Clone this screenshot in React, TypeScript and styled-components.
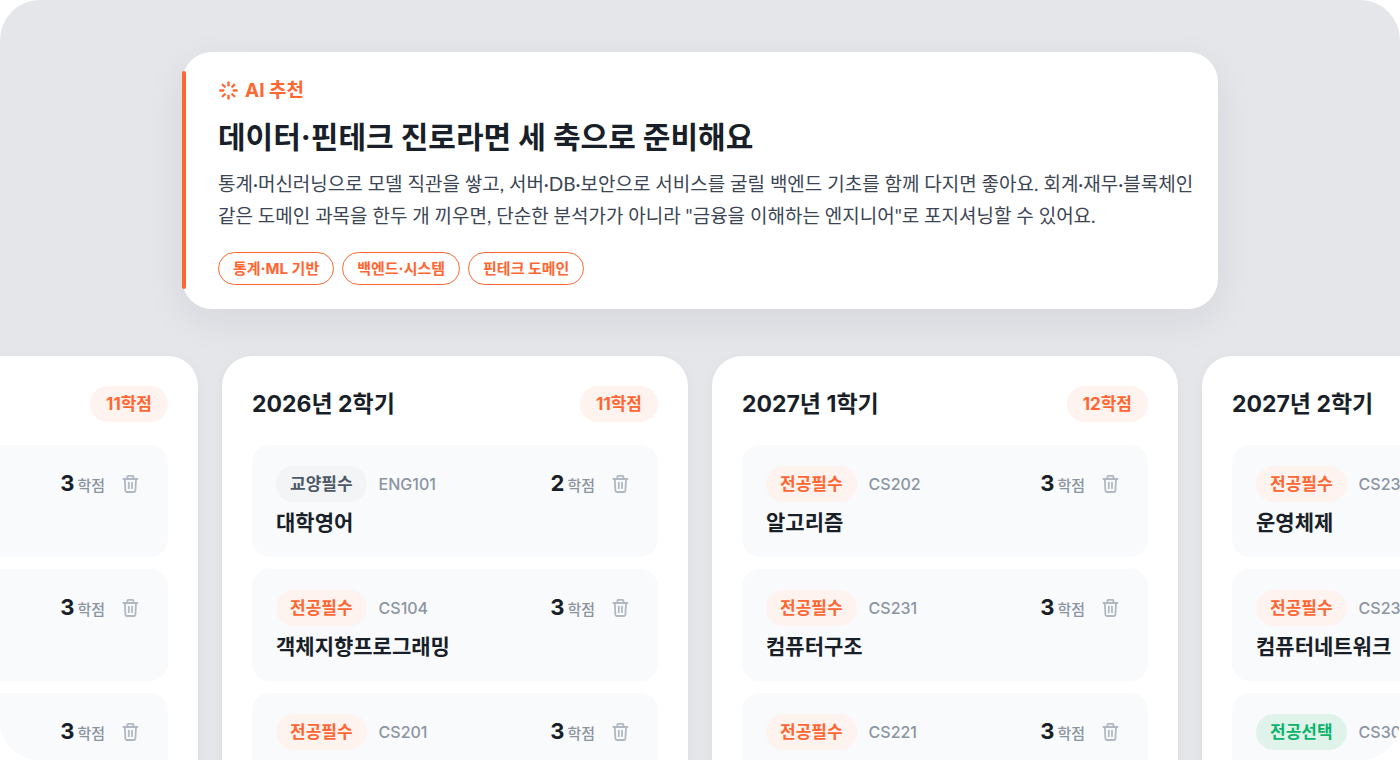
import React from "react";
import styled, { createGlobalStyle, css } from "styled-components";

const color = {
  page: "#ffffff",
  canvas: "#e5e6ea",
  card: "#ffffff",
  item: "#f9fafc",
  accent: "#ff6631",
  accentSoft: "#fff3ef",
  green: "#0ab46c",
  greenSoft: "#e0f3eb",
  gray: "#4e5968",
  graySoft: "#f2f4f6",
  ink: "#191f28",
  text: "#3b4554",
  muted: "#8b95a1",
  icon: "#b0b8c1",
};

const GlobalStyle = createGlobalStyle`
  *, *::before, *::after { box-sizing: border-box; }
  body {
    margin: 0;
    background: ${color.page};
    color: ${color.ink};
    font-family: Inter, "Noto Sans CJK KR", sans-serif;
  }
  h1, h2, h3, p, ul { margin: 0; padding: 0; }
  ul { list-style: none; }
`;

const Canvas = styled.main`
  display: flex;
  flex-direction: column;
  align-items: center;
  gap: 47px;
  height: 100vh;
  padding-top: 52px;
  overflow: hidden;
  border-radius: 40px;
  background: ${color.canvas};
`;

const Advice = styled.section`
  position: relative;
  flex: none;
  width: 74%;
  min-width: 1036px;
  padding: 25px 24px 24px 36px;
  border-radius: 30px;
  background: ${color.card};
  box-shadow: 0 12px 40px rgba(25, 31, 40, 0.07);

  &::before {
    content: "";
    position: absolute;
    top: 19px;
    bottom: 20px;
    left: 0;
    width: 4px;
    border-radius: 2px;
    background: ${color.accent};
  }
`;

const AdviceLabel = styled.p`
  display: flex;
  align-items: center;
  gap: 6px;
  color: ${color.accent};
  font-size: 19px;
  font-weight: 700;
  line-height: 28px;

  svg {
    margin-bottom: 2px;
  }
`;

const AdviceTitle = styled.h1`
  margin-top: 11px;
  font-size: 30px;
  font-weight: 700;
  line-height: 42px;
`;

const AdviceText = styled.p`
  margin-top: 10px;
  color: ${color.text};
  font-family: Lato, "Noto Sans CJK KR", sans-serif;
  font-size: 19px;
  line-height: 32px;
  word-break: keep-all;
`;

const TagList = styled.ul`
  display: flex;
  gap: 8px;
  margin-top: 20px;
`;

const Tag = styled.li`
  padding: 1px 14px 0;
  border: 1px solid ${color.accent};
  border-radius: 17px;
  color: ${color.accent};
  font-size: 15px;
  font-weight: 700;
  line-height: 30px;
`;

const Board = styled.div`
  display: flex;
  flex: none;
  gap: 24px;
`;

const Semester = styled.section`
  width: 466px;
  padding: 30px;
  border-radius: 30px;
  background: ${color.card};
  box-shadow: 0 2px 12px rgba(25, 31, 40, 0.04);
`;

const SemesterHeader = styled.header`
  display: flex;
  align-items: center;
  justify-content: space-between;
  margin-bottom: 23px;
`;

const SemesterTitle = styled.h2`
  font-size: 23px;
  font-weight: 700;
  line-height: 36px;
`;

type Tone = "accent" | "gray" | "green";

const tones = {
  accent: css`color: ${color.accent}; background: ${color.accentSoft};`,
  gray: css`color: ${color.gray}; background: ${color.graySoft};`,
  green: css`color: ${color.green}; background: ${color.greenSoft};`,
};

const Badge = styled.span<{ $tone: Tone; $wide?: boolean }>`
  padding: 0 ${({ $wide }) => ($wide ? 16 : 14)}px;
  border-radius: 18px;
  font-size: 17px;
  font-weight: 700;
  line-height: 36px;
  white-space: nowrap;
  ${({ $tone }) => tones[$tone]}
`;

const CourseList = styled.ul`
  display: grid;
  gap: 12px;
`;

const Course = styled.li`
  height: 112px;
  padding: 21px 24px;
  border-radius: 18px;
  background: ${color.item};
`;

const CourseTop = styled.div`
  display: flex;
  align-items: center;
  height: 36px;
`;

const Code = styled.span`
  margin-left: 12px;
  color: ${color.muted};
  font-size: 16px;
  font-weight: 500;
`;

const Credit = styled.span`
  margin-left: auto;
  color: ${color.muted};
  font-size: 15px;
  font-weight: 500;
  line-height: 36px;
`;

const CreditValue = styled.strong`
  margin-right: 3px;
  color: ${color.ink};
  font-size: 22px;
  font-weight: 700;
`;

const DeleteButton = styled.button`
  display: flex;
  margin: 0 3px 0 14px;
  padding: 0;
  border: 0;
  background: none;
  color: ${color.icon};
  cursor: pointer;
`;

const CourseName = styled.h3`
  margin-top: 5px;
  font-size: 21px;
  font-weight: 700;
  line-height: 32px;
`;

const SparkIcon = () => (
  <svg width="21" height="21" viewBox="0 0 21 21" fill="none" stroke="currentColor" strokeWidth="2.4" strokeLinecap="round" aria-hidden="true">
    {[0, 45, 90, 135, 180, 225, 270, 315].map((angle) => (
      <path key={angle} d="M10.5 2.4V5.2" transform={`rotate(${angle} 10.5 10.5)`} />
    ))}
  </svg>
);

const TrashIcon = () => (
  <svg width="22" height="22" viewBox="0 0 22 22" fill="none" stroke="currentColor" strokeWidth="1.8" strokeLinecap="round" strokeLinejoin="round" aria-hidden="true">
    <path d="M4.4 6H18.4" />
    <path d="M8.4 5.8V3.6Q8.4 2.8 9.2 2.8H13.6Q14.4 2.8 14.4 3.6V5.8" />
    <path d="M5.8 6.2L6.4 17.8Q6.5 19 7.7 19H15.1Q16.3 19 16.4 17.8L17 6.2" />
    <path d="M9.8 9.6V15.2M13 9.6V15.2" />
  </svg>
);

type CourseData = { kind: string; code: string; name: string; credit: number };
type SemesterData = { title: string; courses: CourseData[]; total: number };

const toneOf: Record<string, Tone> = {
  전공필수: "accent",
  교양필수: "gray",
  전공선택: "green",
};

const tags = ["통계·ML 기반", "백엔드·시스템", "핀테크 도메인"];

const semesters: SemesterData[] = [
  {
    title: "2026년 1학기",
    total: 11,
    courses: [
      { kind: "전공필수", code: "CS101", name: "프로그래밍기초", credit: 3 },
      { kind: "전공필수", code: "CS102", name: "이산수학", credit: 3 },
      { kind: "전공필수", code: "CS103", name: "컴퓨터개론", credit: 3 },
    ],
  },
  {
    title: "2026년 2학기",
    total: 11,
    courses: [
      { kind: "교양필수", code: "ENG101", name: "대학영어", credit: 2 },
      { kind: "전공필수", code: "CS104", name: "객체지향프로그래밍", credit: 3 },
      { kind: "전공필수", code: "CS201", name: "자료구조", credit: 3 },
    ],
  },
  {
    title: "2027년 1학기",
    total: 12,
    courses: [
      { kind: "전공필수", code: "CS202", name: "알고리즘", credit: 3 },
      { kind: "전공필수", code: "CS231", name: "컴퓨터구조", credit: 3 },
      { kind: "전공필수", code: "CS221", name: "데이터베이스", credit: 3 },
    ],
  },
  {
    title: "2027년 2학기",
    total: 12,
    courses: [
      { kind: "전공필수", code: "CS232", name: "운영체제", credit: 3 },
      { kind: "전공필수", code: "CS233", name: "컴퓨터네트워크", credit: 3 },
      { kind: "전공선택", code: "CS301", name: "인공지능", credit: 3 },
    ],
  },
];

export default function App() {
  return (
    <>
      <GlobalStyle />
      <Canvas>
        <Advice>
          <AdviceLabel>
            <SparkIcon />
            AI 추천
          </AdviceLabel>
          <AdviceTitle>데이터·핀테크 진로라면 세 축으로 준비해요</AdviceTitle>
          <AdviceText>
            통계·머신러닝으로 모델 직관을 쌓고, 서버·DB·보안으로 서비스를 굴릴 백엔드 기초를 함께 다지면 좋아요. 회계·재무·블록체인
            <br />
            같은 도메인 과목을 한두 개 끼우면, 단순한 분석가가 아니라 "금융을 이해하는 엔지니어"로 포지셔닝할 수 있어요.
          </AdviceText>
          <TagList>
            {tags.map((tag) => (
              <Tag key={tag}>{tag}</Tag>
            ))}
          </TagList>
        </Advice>
        <Board>
          {semesters.map((semester) => (
            <Semester key={semester.title}>
              <SemesterHeader>
                <SemesterTitle>{semester.title}</SemesterTitle>
                <Badge $tone="accent" $wide>{semester.total}학점</Badge>
              </SemesterHeader>
              <CourseList>
                {semester.courses.map((course) => (
                  <Course key={course.code}>
                    <CourseTop>
                      <Badge $tone={toneOf[course.kind]}>{course.kind}</Badge>
                      <Code>{course.code}</Code>
                      <Credit>
                        <CreditValue>{course.credit}</CreditValue>
                        학점
                      </Credit>
                      <DeleteButton type="button" aria-label={`${course.name} 삭제`}>
                        <TrashIcon />
                      </DeleteButton>
                    </CourseTop>
                    <CourseName>{course.name}</CourseName>
                  </Course>
                ))}
              </CourseList>
            </Semester>
          ))}
        </Board>
      </Canvas>
    </>
  );
}
